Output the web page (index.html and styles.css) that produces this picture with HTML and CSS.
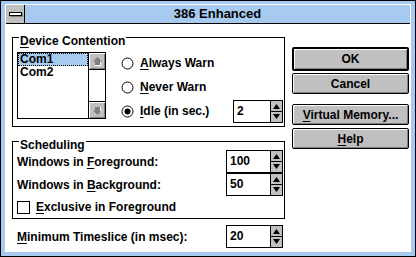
FILE: index.html
```html
<!DOCTYPE html>
<html>
<head>
<meta charset="utf-8">
<title>386 Enhanced</title>
<link rel="stylesheet" href="styles.css">
</head>
<body>
<div class="window">
  <div class="frame">
    <div class="titlebar">
      <div class="sysmenu"><span class="sysbar"></span></div>
      <div class="title">386 Enhanced</div>
    </div>
    <div class="client">
      <div class="left">
        <div class="group contention">
          <span class="legend"><u>D</u>evice Contention</span>
          <div class="listbox">
            <div class="items">
              <div class="item selected">Com1</div>
              <div class="item">Com2</div>
            </div>
            <div class="vscroll">
              <div class="sbtn"><svg width="15" height="15" viewBox="0 0 15 15"><polygon points="7.5,3 12,7.5 10,7.5 10,11 5,11 5,7.5 3,7.5" fill="#808080"/><polyline points="10.5,8 10.5,11.5 5,11.5" fill="none" stroke="#fff" stroke-width="1"/></svg></div>
              <div class="strack"></div>
              <div class="sbtn"><svg width="15" height="15" viewBox="0 0 15 15"><polygon points="7.5,12 12,7.5 10,7.5 10,4 5,4 5,7.5 3,7.5" fill="#808080"/><polyline points="10.5,4 10.5,8 12,8" fill="none" stroke="#fff" stroke-width="1"/></svg></div>
            </div>
          </div>
          <div class="radios">
            <div class="radio">
              <svg class="rb" width="13" height="13" viewBox="0 0 13 13"><circle cx="6.5" cy="6.5" r="5.5" fill="#fff" stroke="#000" stroke-width="1"/></svg>
              <span><u>A</u>lways Warn</span>
            </div>
            <div class="radio">
              <svg class="rb" width="13" height="13" viewBox="0 0 13 13"><circle cx="6.5" cy="6.5" r="5.5" fill="#fff" stroke="#000" stroke-width="1"/></svg>
              <span><u>N</u>ever Warn</span>
            </div>
            <div class="radio">
              <svg class="rb" width="13" height="13" viewBox="0 0 13 13"><circle cx="6.5" cy="6.5" r="5.5" fill="#fff" stroke="#000" stroke-width="1"/><circle cx="6.5" cy="6.5" r="3" fill="#000"/></svg>
              <span><u>I</u>dle (in sec.)</span>
              <div class="spin idle">
                <span class="val">2</span>
                <span class="arrows"><svg width="11" height="21" viewBox="0 0 11 21"><polygon points="5.5,3 9,8 2,8" fill="#000"/><rect x="0" y="10" width="11" height="1" fill="#000"/><polygon points="2,13 9,13 5.5,18" fill="#000"/></svg></span>
              </div>
            </div>
          </div>
        </div>

        <div class="group scheduling">
          <span class="legend">Scheduling</span>
          <div class="frow">
            <span>Windows in <u>F</u>oreground:</span>
            <div class="spin">
              <span class="val">100</span>
              <span class="arrows"><svg width="11" height="21" viewBox="0 0 11 21"><polygon points="5.5,3 9,8 2,8" fill="#000"/><rect x="0" y="10" width="11" height="1" fill="#000"/><polygon points="2,13 9,13 5.5,18" fill="#000"/></svg></span>
            </div>
          </div>
          <div class="frow">
            <span>Windows in <u>B</u>ackground:</span>
            <div class="spin">
              <span class="val">50</span>
              <span class="arrows"><svg width="11" height="21" viewBox="0 0 11 21"><polygon points="5.5,3 9,8 2,8" fill="#000"/><rect x="0" y="10" width="11" height="1" fill="#000"/><polygon points="2,13 9,13 5.5,18" fill="#000"/></svg></span>
            </div>
          </div>
          <div class="crow">
            <span class="check"></span>
            <span><u>E</u>xclusive in Foreground</span>
          </div>
        </div>

        <div class="frow timeslice">
          <span><u>M</u>inimum Timeslice (in msec):</span>
          <div class="spin">
            <span class="val">20</span>
            <span class="arrows"><svg width="11" height="21" viewBox="0 0 11 21"><polygon points="5.5,3 9,8 2,8" fill="#000"/><rect x="0" y="10" width="11" height="1" fill="#000"/><polygon points="2,13 9,13 5.5,18" fill="#000"/></svg></span>
          </div>
        </div>
      </div>

      <div class="right">
        <div class="btn default">OK</div>
        <div class="btn cancel">Cancel</div>
        <div class="btn vm"><span><u>V</u>irtual Memory...</span></div>
        <div class="btn help"><span><u>H</u>elp</span></div>
      </div>
    </div>
  </div>
</div>
</body>
</html>
```

FILE: styles.css
```css
* { box-sizing: border-box; }

html, body {
  margin: 0;
  padding: 0;
}

body {
  width: 416px;
  height: 257px;
  overflow: hidden;
  background: #fff;
  color: #000;
  font-family: "Liberation Sans", Arial, sans-serif;
  font-weight: bold;
  font-size: 12px;
  line-height: 14px;
}

u {
  text-decoration: underline;
  text-decoration-thickness: 1px;
  text-underline-offset: 2px;
}

.window {
  width: 416px;
  height: 257px;
  border: 1px solid #000;
  background: #a6caf0;
  padding: 3px 4px 4px 4px;
  display: flex;
}

.frame {
  flex: 1;
  border: 1px solid #fff;
  background: #fff;
  display: flex;
  flex-direction: column;
}

.titlebar {
  height: 19px;
  flex: none;
  border-bottom: 1px solid #000;
  background: #a6caf0;
  display: flex;
}

.sysmenu {
  width: 19px;
  border-right: 1px solid #000;
  background: #c0c0c0;
  display: flex;
  align-items: center;
  justify-content: center;
}

.sysbar {
  width: 13px;
  height: 4px;
  border: 1px solid #000;
  background: #fff;
  box-shadow: 1px 1px 0 #808080;
}

.title {
  flex: 1;
  text-align: center;
  line-height: 18px;
  font-size: 13px;
}

.client {
  flex: 1;
  display: flex;
  padding-left: 6px;
  gap: 7px;
}

.left {
  width: 273px;
  padding-top: 13px;
  display: flex;
  flex-direction: column;
}

.right {
  width: 117px;
  padding-top: 23px;
  display: flex;
  flex-direction: column;
}

/* group boxes */
.group {
  position: relative;
  border: 1px solid #000;
}

.legend {
  position: absolute;
  left: 6px;
  top: -4px;
  padding: 0 1px;
  background: #fff;
  white-space: nowrap;
}

.contention {
  height: 90px;
  padding: 14px 1px 0 4px;
  display: flex;
  gap: 15px;
}

/* list box */
.listbox {
  width: 89px;
  height: 67px;
  border: 1px solid #000;
  display: flex;
  background: #fff;
}

.items {
  flex: 1;
}

.item {
  height: 13px;
  line-height: 13px;
  padding-left: 2px;
  overflow: hidden;
}

.item.selected {
  background: #a6caf0;
  outline: 1px dotted #000;
  outline-offset: -1px;
}

.vscroll {
  width: 17px;
  border-left: 1px solid #000;
  display: flex;
  flex-direction: column;
}

.sbtn {
  height: 17px;
  background: #c0c0c0;
  box-shadow: inset 1px 1px #fff, inset -1px -1px #808080;
  display: flex;
  align-items: center;
  justify-content: center;
}

.sbtn:first-child { border-bottom: 1px solid #000; }
.sbtn:last-child { border-top: 1px solid #000; }

.strack {
  flex: 1;
  background: #fff;
}

/* radios */
.radios {
  flex: 1;
  display: flex;
  flex-direction: column;
  gap: 2px;
}

.radio {
  height: 22px;
  display: flex;
  align-items: center;
  gap: 6px;
}

.rb { flex: none; }

/* spin fields */
.spin {
  margin-left: auto;
  width: 57px;
  height: 23px;
  border: 1px solid #000;
  background: #fff;
  display: flex;
  align-items: stretch;
}

.spin.idle { width: 50px; }

.val {
  flex: 1;
  padding-left: 3px;
  line-height: 21px;
}

.arrows {
  width: 12px;
  border-left: 1px solid #000;
  background: #c0c0c0;
  display: flex;
}

/* scheduling */
.scheduling {
  margin-top: 14px;
  height: 78px;
  padding: 8px 1px 0 4px;
}

.frow {
  height: 23px;
  display: flex;
  align-items: center;
}

.crow {
  height: 22px;
  display: flex;
  align-items: center;
  gap: 6px;
}

.check {
  width: 13px;
  height: 13px;
  border: 1px solid #000;
  background: #fff;
}

.timeslice {
  margin-top: 6px;
  padding: 0 2px 0 5px;
}

/* buttons */
.btn {
  height: 21px;
  border: 1px solid #000;
  border-radius: 2px;
  background: #c0c0c0;
  box-shadow: inset 1px 1px #fff, inset -1px -1px #808080;
  display: flex;
  align-items: center;
  justify-content: center;
}

.btn.default {
  height: 24px;
  border-width: 2px;
}

.btn.cancel { margin-top: 2px; }
.btn.vm { margin-top: 10px; }
.btn.help { margin-top: 3px; }
```
